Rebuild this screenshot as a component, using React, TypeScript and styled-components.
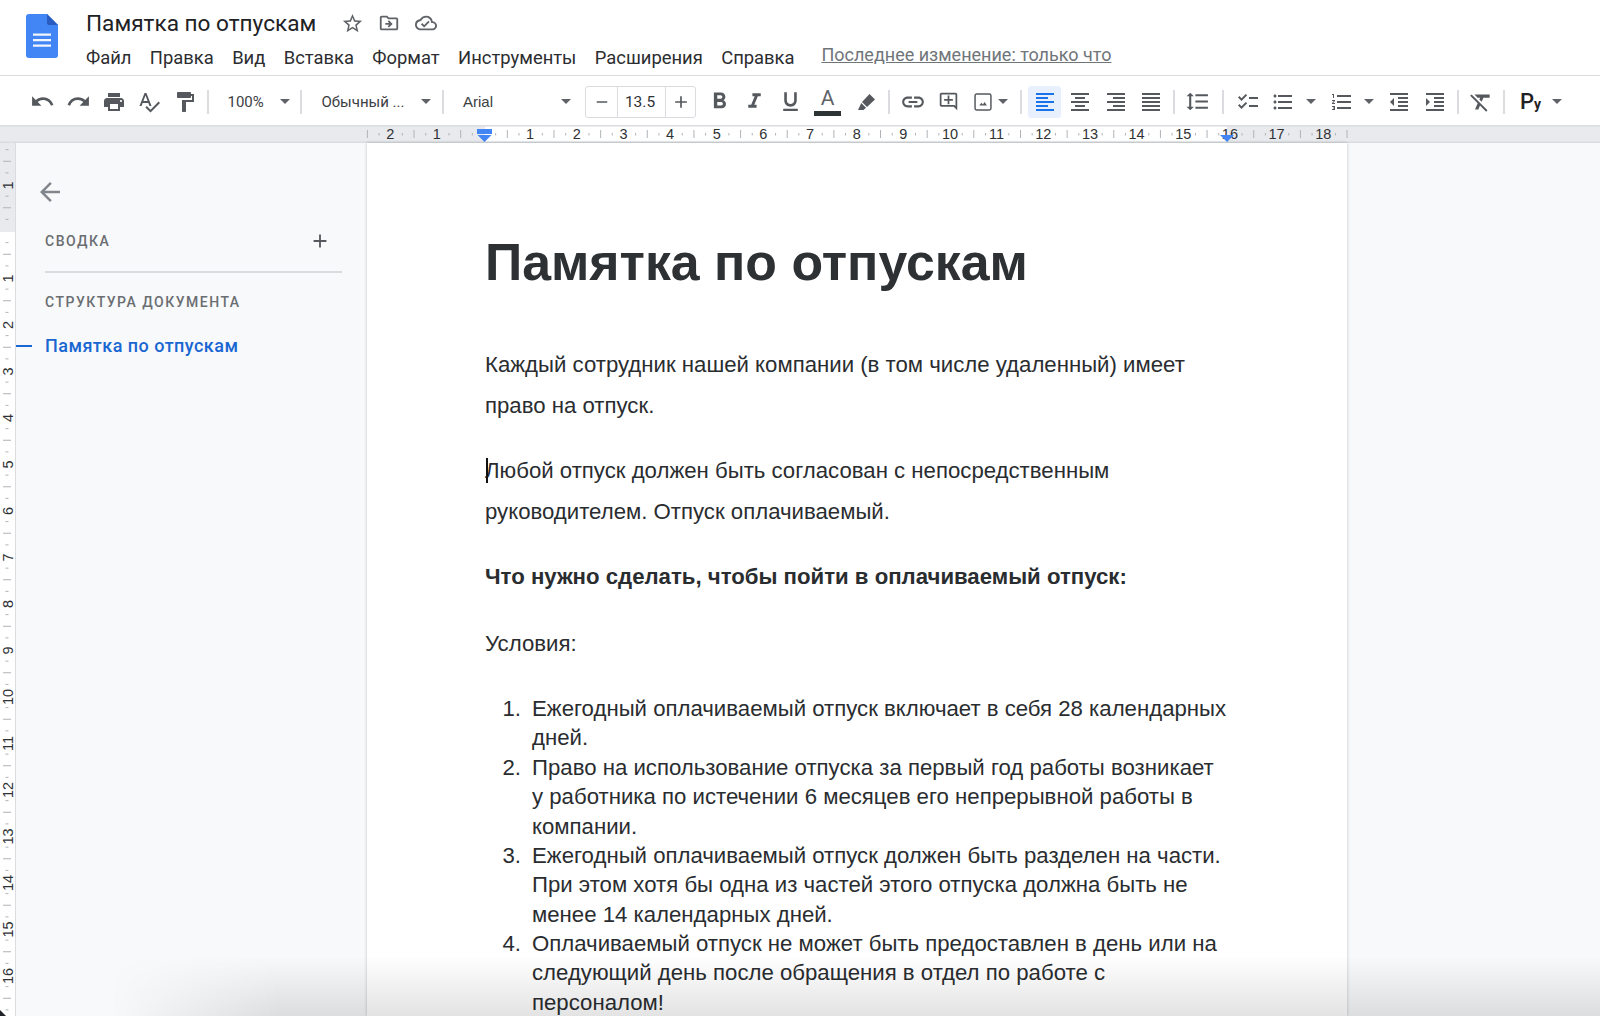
import React from "react";
import styled, { createGlobalStyle } from "styled-components";
import {
  MdUndo, MdRedo, MdPrint, MdSpellcheck, MdFormatPaint, MdFormatBold, MdFormatItalic, MdFormatUnderlined,
  MdInsertLink, MdOutlineAddComment, MdFormatAlignLeft, MdFormatAlignCenter, MdFormatAlignRight, MdFormatAlignJustify,
  MdFormatLineSpacing, MdChecklist, MdFormatListBulleted, MdFormatListNumbered, MdFormatIndentDecrease,
  MdFormatIndentIncrease, MdFormatClear, MdStarBorder, MdOutlineDriveFileMove, MdOutlineCloudDone, MdArrowBack,
  MdAdd, MdRemove,
} from "react-icons/md";

const GlobalStyle = createGlobalStyle`
  html, body { margin: 0; padding: 0; background: #fff; }
  body { font-family: Roboto, "Liberation Sans", sans-serif; overflow: hidden; }
  #root { height: 1016px; }
`;

const Shell = styled.div`
  position: relative;
  width: 1600px;
  height: 1016px;
  overflow: hidden;
  display: flex;
  flex-direction: column;
`;

const Header = styled.header`
  height: 76px;
  flex: none;
  box-sizing: border-box;
  border-bottom: 1.5px solid #dadce0;
  display: flex;
  padding: 14px 0 0 26px;
  gap: 28px;
`;

const HeaderText = styled.div`
  display: flex;
  flex-direction: column;
  margin-top: -2px;
`;

const TitleRow = styled.div`
  display: flex;
  align-items: center;
  height: 22px;
`;

const DocName = styled.span`
  font-size: 22.6px;
  color: #202124;
  margin-right: 17.5px;
`;

const TitleIcon = styled.span`
  width: 37px;
  display: flex;
  justify-content: center;
  color: #5f6368;
`;

const MenuBar = styled.nav`
  display: flex;
  align-items: center;
  gap: 18.4px;
  margin-top: 12px;
  height: 22px;
  font-size: 18.4px;
  color: #2b2d30;
`;

const MenuItem = styled.span``;

const LastEdit = styled.span`
  margin-left: 8.5px;
  font-size: 18px;
  color: #70757a;
  text-decoration: underline;
  position: relative;
  top: -3px;
`;

const Toolbar = styled.div`
  height: 48.5px;
  flex: none;
  box-sizing: border-box;
  display: flex;
  align-items: center;
  padding: 3px 0 0 25px;
  color: #55595d;
`;

const Tool = styled.span<{ $w?: number; $ml?: number; $active?: boolean }>`
  flex: none;
  width: ${(p) => p.$w ?? 35.5}px;
  margin-left: ${(p) => p.$ml ?? 0}px;
  height: 32px;
  display: flex;
  align-items: center;
  justify-content: center;
  border-radius: 3px;
  background: ${(p) => (p.$active ? "#e8f0fe" : "transparent")};
  color: ${(p) => (p.$active ? "#1a73e8" : "inherit")};
`;

const Sep = styled.span<{ $ml?: number }>`
  flex: none;
  width: 2px;
  height: 24px;
  margin-left: ${(p) => p.$ml ?? 0}px;
  background: #dadce0;
`;

const Select = styled.span<{ $w: number; $pl: number; $pr: number; $font?: string }>`
  flex: none;
  box-sizing: border-box;
  width: ${(p) => p.$w}px;
  padding: 0 ${(p) => p.$pr}px 0 ${(p) => p.$pl}px;
  display: flex;
  align-items: center;
  justify-content: space-between;
  font-family: ${(p) => p.$font ?? "Roboto"}, sans-serif;
  font-size: 15px;
  color: #3c4043;
`;

const Caret = styled.span<{ $ml?: number }>`
  flex: none;
  width: 0;
  height: 0;
  margin-left: ${(p) => p.$ml ?? 0}px;
  border-left: 5px solid transparent;
  border-right: 5px solid transparent;
  border-top: 5px solid #5f6368;
`;

const Stepper = styled.span`
  flex: none;
  box-sizing: border-box;
  width: 111px;
  height: 32px;
  display: grid;
  grid-template-columns: 31px 1fr 30px;
  border: 1.5px solid #dadce0;
  border-radius: 3px;
  font-size: 15px;
  color: #3c4043;
`;

const StepCell = styled.span<{ $divided?: boolean }>`
  display: flex;
  align-items: center;
  justify-content: center;
  border-left: ${(p) => (p.$divided ? "1.5px solid #dadce0" : "none")};
  color: #55595d;
`;

const StepValue = styled(StepCell)`
  color: #2f3235;
  padding-right: 3px;
  font-size: 15.5px;
`;

const ColorLetter = styled.span`
  display: flex;
  flex-direction: column;
  align-items: center;
  font-size: 21px;
  line-height: 20px;
  color: #5f6368;
`;

const ColorBar = styled.span`
  width: 27px;
  height: 4.5px;
  margin-top: 3px;
  background: #2d3436;
`;

const InputTool = styled.span`
  flex: none;
  margin-left: 15px;
  width: 32px;
  display: flex;
  align-items: baseline;
  color: #1f2124;
`;

const InputBig = styled.span`
  font-size: 22px;
  font-weight: 500;
`;

const InputSmall = styled.span`
  font-size: 14px;
  font-weight: 700;
`;

const RulerBar = styled.svg`
  display: block;
  flex: none;
  width: 1600px;
  height: 18px;
`;

const Body = styled.div`
  flex: 1;
  display: flex;
  min-height: 0;
  background: #f8f9fa;
`;

const SideRuler = styled.svg`
  display: block;
  flex: none;
  width: 16px;
  height: 873px;
`;

const Sidebar = styled.aside`
  flex: none;
  width: 351px;
  box-sizing: border-box;
  padding-top: 34px;
  display: flex;
  flex-direction: column;
`;

const BackLink = styled.span`
  margin-left: 19px;
  height: 30px;
  color: #80868b;
  display: flex;
`;

const SideHead = styled.div`
  margin: 19px 25px 0 29px;
  height: 30px;
  display: flex;
  align-items: center;
  justify-content: space-between;
  font-size: 14px;
  font-weight: 500;
  letter-spacing: 1.5px;
  color: #6a6e72;
`;

const SideAdd = styled.span`
  display: flex;
  width: 22px;
  margin-right: 11px;
  color: #55595d;
`;

const SideRule = styled.hr`
  margin: 15px 25px 0 29px;
  border: none;
  height: 2px;
  background: #dadce0;
`;

const OutlineHead = styled.div`
  margin: 19.5px 0 0 29px;
  font-size: 14px;
  line-height: 20px;
  font-weight: 500;
  letter-spacing: 1.5px;
  color: #6a6e72;
`;

const OutlineItem = styled.div`
  margin-top: 21.5px;
  display: flex;
  align-items: center;
  gap: 13px;
  font-size: 18px;
  line-height: 24px;
  font-weight: 500;
  letter-spacing: 0.47px;
  color: #1967d2;
  &::before {
    content: "";
    width: 16px;
    height: 2px;
    background: #1967d2;
  }
`;

const Page = styled.main`
  flex: none;
  width: 980px;
  box-sizing: border-box;
  background: #fff;
  box-shadow: 0 0 3px rgba(60, 64, 67, 0.3);
  padding: 89px 119px 0 118px;
  font-family: "Liberation Sans", Arial, sans-serif;
  color: #2a2d30;
`;

const DocTitle = styled.h1`
  margin: 0 0 52px;
  font-size: 51.8px;
  line-height: 60px;
  font-weight: 700;
  color: #2d3134;
`;

const Para = styled.p`
  position: relative;
  margin: 0 0 24.5px;
  font-size: 22.2px;
  line-height: 41px;
`;

const StrongPara = styled(Para)`
  font-weight: 700;
  margin: -1px 0 26.5px;
`;

const TextCaret = styled.span`
  position: absolute;
  left: 1px;
  top: 8px;
  width: 1.5px;
  height: 25px;
  background: #111;
`;

const Steps = styled.ol`
  list-style: none;
  margin: 30px 0 0;
  padding: 0;
  font-size: 22.2px;
  line-height: 29.37px;
`;

const Step = styled.li`
  display: grid;
  grid-template-columns: 47px 1fr;
`;

const StepNumber = styled.span`
  text-align: right;
  padding-right: 11px;
`;

const BottomFade = styled.div`
  position: absolute;
  left: 0;
  right: 0;
  bottom: 0;
  height: 60px;
  pointer-events: none;
  background: linear-gradient(to bottom, rgba(0, 0, 0, 0), rgba(0, 0, 0, 0.11));
  -webkit-mask-image: linear-gradient(to right, transparent 110px, #000 280px);
  mask-image: linear-gradient(to right, transparent 110px, #000 280px);
`;

const CornerMark = styled.div`
  position: absolute;
  left: 0;
  bottom: 0;
  width: 6px;
  height: 6px;
  background: #1f2328;
  clip-path: polygon(0 0, 100% 100%, 0 100%);
`;

const Unit = 46.65;
const Zero = 483.5;

function TopRuler() {
  const labels = Array.from({ length: 21 }, (_, i) => i - 2).filter((n) => n !== 0);
  const ticks: { x: number; long: boolean }[] = [];
  for (let n = -2; n <= 18; n++) {
    const x = Zero + n * Unit;
    ticks.push({ x: x - Unit / 4, long: false }, { x: x + Unit / 4, long: false }, { x: x + Unit / 2, long: true });
    if (n === -2) ticks.push({ x: x - Unit / 2, long: true });
  }
  return (
    <RulerBar viewBox="0 0 1600 18">
      <rect width="1600" height="18" fill="#e8eaed" />
      <rect x="485" width="742" height="18" fill="#fff" />
      <rect width="1600" height="1.5" fill="#dadce0" />
      <rect y="16.5" width="1600" height="1.5" fill="#dadce0" />
      {ticks.map((t) =>
        t.long ? (
          <rect key={t.x} x={t.x} y="5" width="1" height="8" fill="#b0b4b8" />
        ) : (
          <rect key={t.x} x={t.x} y="8" width="1" height="2.5" fill="#b0b4b8" />
        )
      )}
      {labels.map((n) => (
        <text key={n} x={Zero + n * Unit} y="14" textAnchor="middle" fontSize="14.5" fontFamily="Liberation Sans" fill="#2f3235">
          {Math.abs(n)}
        </text>
      ))}
      <rect x="477" y="4" width="15" height="5" fill="#4285f4" />
      <path d="M477.500 10h14l-7 7z" fill="#4285f4" />
      <path d="M1220 10h14l-7 7z" fill="#4285f4" />
    </RulerBar>
  );
}

function LeftRuler() {
  const origin = 230.5 - 143;
  const step = 46.5;
  const labels = Array.from({ length: 18 }, (_, i) => i - 1).filter((n) => n !== 0);
  const ticks: { y: number; long: boolean }[] = [];
  for (let n = -2; n <= 17; n++) {
    const y = origin + n * step;
    ticks.push({ y: y - step / 4, long: false }, { y: y + step / 4, long: false }, { y: y + step / 2, long: true });
  }
  return (
    <SideRuler viewBox="0 0 16 873">
      <rect width="16" height="873" fill="#fff" />
      <rect width="16" height={origin + 1.5} fill="#e8eaed" />
      <rect x="15" width="1.5" height="873" fill="#dadce0" />
      {ticks.map((t) =>
        t.long ? (
          <rect key={t.y} x="3" y={t.y} width="8" height="1" fill="#b0b4b8" />
        ) : (
          <rect key={t.y} x="5.5" y={t.y} width="3" height="1" fill="#b0b4b8" />
        )
      )}
      {labels.map((n) => {
        const y = origin + n * step + 1.5;
        return (
          <text key={n} transform={`translate(13 ${y}) rotate(-90)`} textAnchor="middle" fontSize="14.5" fontFamily="Liberation Sans" fill="#2f3235">
            {Math.abs(n)}
          </text>
        );
      })}
    </SideRuler>
  );
}

function DocsLogo() {
  return (
    <svg width="32" height="44" viewBox="0 0 32 44" style={{ flex: "none" }}>
      <path d="M3 0h18l11 11v30a3 3 0 0 1-3 3H3a3 3 0 0 1-3-3V3a3 3 0 0 1 3-3z" fill="#4285f4" />
      <path d="M21 0l11 11H23.500A2.500 2.500 0 0 1 21 8.500z" fill="#2a5bc0" />
      <path d="M7 19.500h18v2.300H7zM7 25h18v2.300H7zM7 30.500h18v2.300H7z" fill="#f1f5fe" />
    </svg>
  );
}

function Highlighter() {
  return (
    <svg width="17" height="16" viewBox="0 0 17 16" fill="currentColor">
      <path d="M11.500 0L17 5.500 9 13 4 8z" />
      <path d="M3.300 9L8 13.700 5.500 16H0z" />
    </svg>
  );
}

function ImageIcon() {
  return (
    <svg width="18" height="18" viewBox="0 0 17 17" fill="none">
      <rect x="1" y="1" width="15" height="15" rx="1.500" stroke="currentColor" strokeWidth="1.400" />
      <path d="M5 11.800l2-2.500 1.400 1.500 1.600-2.200 2.200 3.200z" fill="currentColor" />
    </svg>
  );
}

export default function App() {
  return (
    <Shell>
      <GlobalStyle />
      <Header>
        <DocsLogo />
        <HeaderText>
          <TitleRow>
            <DocName>Памятка по отпускам</DocName>
            <TitleIcon><MdStarBorder size={23} /></TitleIcon>
            <TitleIcon><MdOutlineDriveFileMove size={22} /></TitleIcon>
            <TitleIcon><MdOutlineCloudDone size={22} /></TitleIcon>
          </TitleRow>
          <MenuBar>
            <MenuItem>Файл</MenuItem>
            <MenuItem>Правка</MenuItem>
            <MenuItem>Вид</MenuItem>
            <MenuItem>Вставка</MenuItem>
            <MenuItem>Формат</MenuItem>
            <MenuItem>Инструменты</MenuItem>
            <MenuItem>Расширения</MenuItem>
            <MenuItem>Справка</MenuItem>
            <LastEdit>Последнее изменение: только что</LastEdit>
          </MenuBar>
        </HeaderText>
      </Header>
      <Toolbar>
        <Tool><MdUndo size={25} /></Tool>
        <Tool><MdRedo size={25} /></Tool>
        <Tool><MdPrint size={24} /></Tool>
        <Tool><MdSpellcheck size={24} /></Tool>
        <Tool><MdFormatPaint size={24} /></Tool>
        <Sep $ml={4.5} />
        <Select $w={91} $pl={18.5} $pr={10}>100%<Caret /></Select>
        <Sep />
        <Select $w={140} $pl={19.5} $pr={11.5}>Обычный ...<Caret /></Select>
        <Sep />
        <Select $w={141} $pl={19} $pr={14} $font="'Liberation Sans'">Arial<Caret /></Select>
        <Stepper>
          <StepCell><MdRemove size={18} /></StepCell>
          <StepValue $divided>13.5</StepValue>
          <StepCell $divided><MdAdd size={20} /></StepCell>
        </Stepper>
        <Tool $ml={5.5}><MdFormatBold size={27} /></Tool>
        <Tool><MdFormatItalic size={25} /></Tool>
        <Tool><MdFormatUnderlined size={25} /></Tool>
        <Tool $w={39}>
          <ColorLetter>A<ColorBar /></ColorLetter>
        </Tool>
        <Tool $w={39}><Highlighter /></Tool>
        <Sep $ml={2} />
        <Tool $ml={5}><MdInsertLink size={26} /></Tool>
        <Tool><MdOutlineAddComment size={21} /></Tool>
        <Tool $w={33}><ImageIcon /></Tool>
        <Caret $ml={-1} />
        <Sep $ml={12} />
        <Tool $w={33} $ml={6} $active><MdFormatAlignLeft size={24} /></Tool>
        <Tool $ml={1.5}><MdFormatAlignCenter size={24} /></Tool>
        <Tool><MdFormatAlignRight size={24} /></Tool>
        <Tool><MdFormatAlignJustify size={24} /></Tool>
        <Sep $ml={4} />
        <Tool $ml={5}><MdFormatLineSpacing size={25} /></Tool>
        <Sep $ml={6.5} />
        <Tool $ml={6}><MdChecklist size={24} /></Tool>
        <Tool><MdFormatListBulleted size={24} /></Tool>
        <Caret $ml={5} />
        <Tool $ml={8.25}><MdFormatListNumbered size={24} /></Tool>
        <Caret $ml={4.25} />
        <Tool $ml={7.25}><MdFormatIndentDecrease size={24} /></Tool>
        <Tool><MdFormatIndentIncrease size={24} /></Tool>
        <Sep $ml={4.75} />
        <Tool $ml={4.25}><MdFormatClear size={26} /></Tool>
        <Sep $ml={4.25} />
        <InputTool><InputBig>Р</InputBig><InputSmall>у</InputSmall></InputTool>
        <Caret />
      </Toolbar>
      <TopRuler />
      <Body>
        <LeftRuler />
        <Sidebar>
          <BackLink><MdArrowBack size={30} /></BackLink>
          <SideHead>
            СВОДКА
            <SideAdd><MdAdd size={22} /></SideAdd>
          </SideHead>
          <SideRule />
          <OutlineHead>СТРУКТУРА ДОКУМЕНТА</OutlineHead>
          <OutlineItem>Памятка по отпускам</OutlineItem>
        </Sidebar>
        <Page>
          <DocTitle>Памятка по отпускам</DocTitle>
          <Para>Каждый сотрудник нашей компании (в том числе удаленный) имеет право на отпуск.</Para>
          <Para>
            <TextCaret />
            Любой отпуск должен быть согласован с непосредственным руководителем. Отпуск оплачиваемый.
          </Para>
          <StrongPara>Что нужно сделать, чтобы пойти в оплачиваемый отпуск:</StrongPara>
          <Para>Условия:</Para>
          <Steps>
            <Step><StepNumber>1.</StepNumber><span>Ежегодный оплачиваемый отпуск включает в себя 28 календарных дней.</span></Step>
            <Step><StepNumber>2.</StepNumber><span>Право на использование отпуска за первый год работы возникает у работника по истечении 6 месяцев его непрерывной работы в компании.</span></Step>
            <Step><StepNumber>3.</StepNumber><span>Ежегодный оплачиваемый отпуск должен быть разделен на части. При этом хотя бы одна из частей этого отпуска должна быть не менее 14 календарных дней.</span></Step>
            <Step><StepNumber>4.</StepNumber><span>Оплачиваемый отпуск не может быть предоставлен в день или на следующий день после обращения в отдел по работе с персоналом!</span></Step>
          </Steps>
        </Page>
      </Body>
      <BottomFade />
      <CornerMark />
    </Shell>
  );
}
